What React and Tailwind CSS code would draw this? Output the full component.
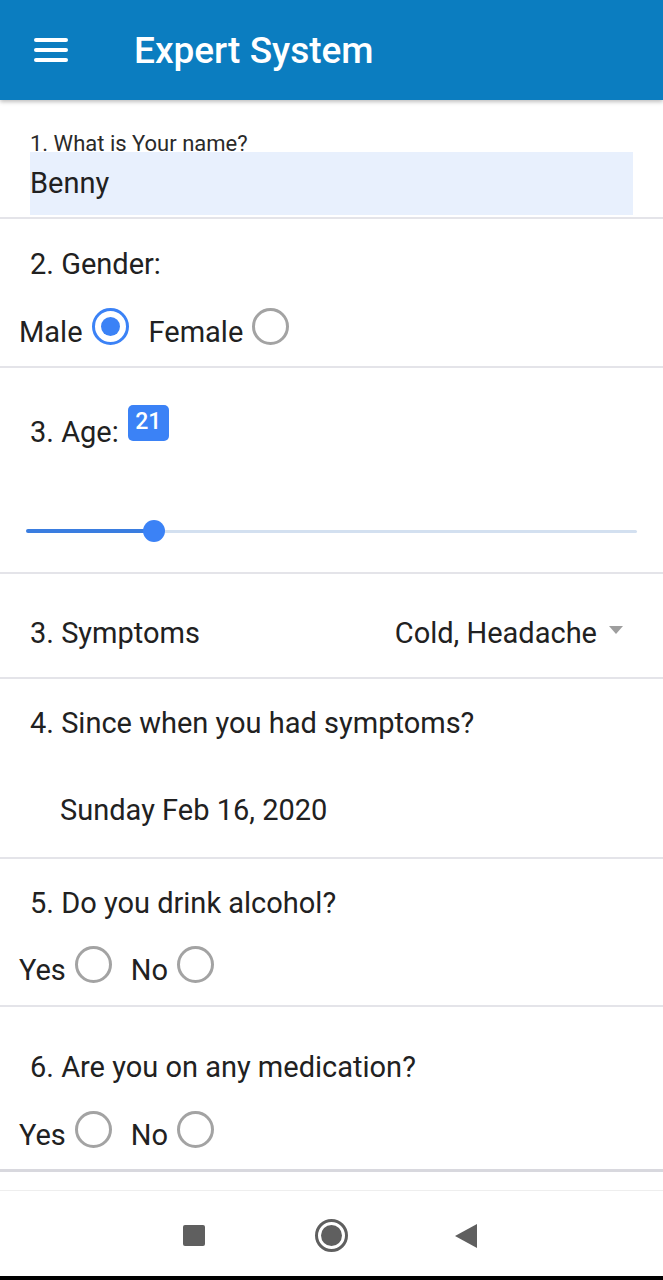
import React from 'react';

const font = { fontFamily: 'Roboto, "Noto Sans", sans-serif' };

const Radio = ({ checked }) => (
    <span
        className={`flex items-center justify-center w-[37px] h-[37px] rounded-full border-[3px] mb-[12px] ${checked ? 'border-[#3b82f6]' : 'border-[#a3a3a3]'}`}
    >
        {checked && <span className="w-[19px] h-[19px] rounded-full bg-[#3b82f6]" />}
    </span>
);

const Divider = () => <div className="h-[2px] bg-[#e4e4e9] shrink-0" />;

const Choice = ({ label, checked, gapAfter }) => (
    <div className={`flex items-center ${gapAfter}`}>
        <span className="text-[29px] leading-[34px] text-[#212121]">{label}</span>
        <span className="ml-[9px]">
            <Radio checked={checked} />
        </span>
    </div>
);

const App = () => {
    return (
        <div className="w-[663px] h-[1280px] bg-white flex flex-col overflow-hidden" style={font}>
            {/* app bar */}
            <div className="h-[100px] shrink-0 bg-[#0b7dc0] flex items-center shadow-[0_2px_4px_rgba(0,0,0,0.25)] relative z-10">
                <div className="ml-[34px] flex flex-col gap-[6px] w-[34px]">
                    <span className="h-[4px] bg-white rounded-sm" />
                    <span className="h-[4px] bg-white rounded-sm" />
                    <span className="h-[4px] bg-white rounded-sm" />
                </div>
                <h1 className="ml-[66px] text-white text-[37px] font-medium leading-none">Expert System</h1>
            </div>

            {/* 1. name */}
            <div className="h-[117px] shrink-0 pt-[32px] px-[30px]">
                <div className="h-[20px] overflow-hidden">
                    <p className="text-[22px] leading-[24px] text-[#2a2a2a]">1. What is Your name?</p>
                </div>
                <div className="h-[63px] bg-[#e8f0fd] flex items-center">
                    <span className="text-[29px] text-[#212121]">Benny</span>
                </div>
            </div>
            <Divider />

            {/* 2. gender */}
            <div className="h-[147px] shrink-0 pt-[28px]">
                <p className="pl-[30px] text-[29px] leading-[34px] text-[#212121]">2. Gender:</p>
                <div className="mt-[31px] pl-[19px] flex items-center h-[40px]">
                    <Choice label="Male" checked gapAfter="mr-[20px]" />
                    <Choice label="Female" />
                </div>
            </div>
            <Divider />

            {/* 3. age */}
            <div className="h-[204px] shrink-0 pt-[37px]">
                <div className="pl-[30px] flex items-start">
                    <span className="mt-[10px] text-[29px] leading-[34px] text-[#212121]">3. Age:</span>
                    <span className="ml-[9px] h-[36px] w-[41px] rounded-[5px] bg-[#3b82f6] text-white text-[23px] font-medium leading-none flex items-start justify-center pt-[5px]">
                        21
                    </span>
                </div>
                <div className="mt-[70px] mx-[26px] h-[24px] flex items-center">
                    <div className="w-[128px] h-[4px] bg-[#3a7de0] rounded-l-full" />
                    <div className="w-[22px] h-[22px] -ml-[11px] rounded-full bg-[#3b82f6] shrink-0" />
                    <div className="flex-1 h-[3px] bg-[#d3e0f0] rounded-r-full" />
                </div>
            </div>
            <Divider />

            {/* symptoms */}
            <div className="h-[103px] shrink-0 pt-[42px] pl-[30px] pr-[40px] flex items-start justify-between">
                <span className="text-[29px] leading-[34px] text-[#212121]">3. Symptoms</span>
                <div className="flex items-center">
                    <span className="text-[29px] leading-[34px] text-[#212121]">Cold, Headache</span>
                    <svg className="ml-[12px] mb-[6px]" width="14" height="8" viewBox="0 0 14 8">
                        <path d="M0 0h14L7 8z" fill="#9e9e9e" />
                    </svg>
                </div>
            </div>
            <Divider />

            {/* 4. since when */}
            <div className="h-[178px] shrink-0 pt-[27px]">
                <p className="pl-[30px] text-[29px] leading-[34px] text-[#212121]">4. Since when you had symptoms?</p>
                <p className="mt-[53px] pl-[60px] text-[29px] leading-[34px] text-[#212121]">Sunday Feb 16, 2020</p>
            </div>
            <Divider />

            {/* 5. alcohol */}
            <div className="h-[146px] shrink-0 pt-[27px]">
                <p className="pl-[30px] text-[29px] leading-[34px] text-[#212121]">5. Do you drink alcohol?</p>
                <div className="mt-[30px] pl-[19px] flex items-center h-[40px]">
                    <Choice label="Yes" gapAfter="mr-[19px]" />
                    <Choice label="No" />
                </div>
            </div>
            <Divider />

            {/* 6. medication */}
            <div className="h-[162px] shrink-0 pt-[43px]">
                <p className="pl-[30px] text-[29px] leading-[34px] text-[#212121]">6. Are you on any medication?</p>
                <div className="mt-[31px] pl-[19px] flex items-center h-[40px]">
                    <Choice label="Yes" gapAfter="mr-[19px]" />
                    <Choice label="No" />
                </div>
            </div>
            <div className="h-[3px] bg-[#d8d8de] shrink-0" />
            <div className="h-[18px] shrink-0" />
            <div className="h-[1px] bg-[#eeeeee] shrink-0" />

            {/* system nav */}
            <div className="h-[85px] shrink-0 pt-[4px] flex items-center">
                <span className="ml-[183px] w-[22px] h-[21px] bg-[#5f5f5f] rounded-[2px]" />
                <span className="ml-[110px] w-[33px] h-[33px] rounded-full border-[3px] border-[#5f5f5f] flex items-center justify-center">
                    <span className="w-[21px] h-[21px] rounded-full bg-[#5f5f5f]" />
                </span>
                <svg className="ml-[107px]" width="22" height="24" viewBox="0 0 22 24">
                    <path d="M22 0v24L0 12z" fill="#5f5f5f" />
                </svg>
            </div>
            <div className="flex-1 bg-black" />
        </div>
    );
};

export default App;
